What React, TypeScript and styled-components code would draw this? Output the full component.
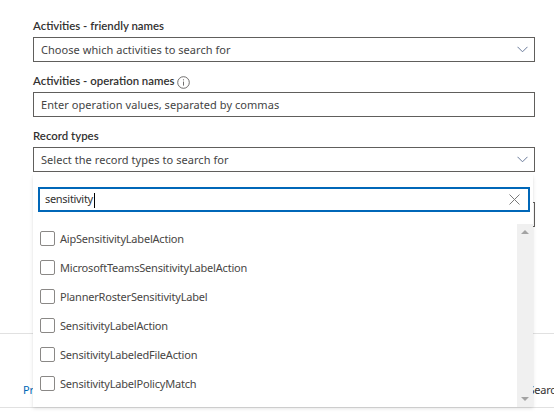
import React from 'react';
import styled, { createGlobalStyle } from 'styled-components';

const GlobalStyle = createGlobalStyle`
  html, body {
    margin: 0;
    padding: 0;
    background: #ffffff;
  }
  body {
    font-family: 'Noto Sans', 'Open Sans', sans-serif;
    color: #323130;
    overflow: hidden;
  }
`;

const Page = styled.div`
  position: relative;
  width: 554px;
  height: 416px;
  overflow: hidden;
`;

const Form = styled.div`
  display: flex;
  flex-direction: column;
  gap: 8px;
  padding: 15px 19px 0 33px;
  height: 333px;
  box-sizing: border-box;
`;

const Field = styled.div`
  display: flex;
  flex-direction: column;
  gap: 2px;
`;

const Label = styled.label`
  display: flex;
  align-items: center;
  gap: 3px;
  height: 20px;
  font-family: 'Lato', 'Noto Sans', sans-serif;
  font-size: 11.4px;
  font-weight: 600;
  color: #323130;
`;

const InfoIcon = styled.span`
  display: inline-flex;
  margin-top: 4px;
  color: #605e5c;
`;

const Box = styled.div`
  display: flex;
  align-items: center;
  justify-content: space-between;
  height: 25px;
  box-sizing: border-box;
  border: 1px solid #605e5c;
  padding: 0 6px 0 7px;
  font-size: 11px;
  letter-spacing: 0.05px;
  color: #444444;
`;

const Chevron = styled.span`
  display: inline-flex;
  color: #6a7a9a;
`;

const Footer = styled.div`
  display: flex;
  align-items: flex-end;
  justify-content: space-between;
  height: 75px;
  box-sizing: border-box;
  border-top: 1px solid #e1e1e1;
  border-bottom: 1px solid #e1e1e1;
  padding: 0 0 10px 23px;
  font-size: 11px;
  letter-spacing: -0.2px;
`;

const FooterLink = styled.span`
  color: #0067b8;
`;

const FooterAction = styled.span`
  color: #323130;
  margin-right: -8px;
`;

const Panel = styled.div`
  position: absolute;
  left: 33px;
  top: 175px;
  width: 500px;
  height: 232px;
  background: #ffffff;
  box-shadow: 0 1.6px 3.6px rgba(0, 0, 0, 0.13), 0 0.3px 0.9px rgba(0, 0, 0, 0.11);
  display: flex;
  flex-direction: column;
`;

const SearchBox = styled.div`
  margin: 12px 3px 0 5px;
  height: 25px;
  box-sizing: border-box;
  border: 2px solid #0067b8;
  display: flex;
  align-items: center;
  justify-content: space-between;
  padding: 0 8px 0 5px;
  font-size: 11px;
  letter-spacing: -0.3px;
  color: #323130;
`;

const Caret = styled.span`
  display: inline-block;
  width: 1px;
  height: 15px;
  background: #000000;
  vertical-align: middle;
  margin-left: 1px;
`;

const ListArea = styled.div`
  flex: 1;
  display: flex;
  margin-top: 12px;
`;

const List = styled.div`
  flex: 1;
  display: flex;
  flex-direction: column;
`;

const Item = styled.div`
  display: flex;
  align-items: center;
  gap: 5px;
  height: 29px;
  padding-left: 7px;
  font-size: 11px;
  letter-spacing: -0.2px;
  color: #484644;
`;

const Check = styled.span`
  width: 15px;
  height: 15px;
  box-sizing: border-box;
  border: 1px solid #8a8886;
  border-radius: 2px;
  flex: none;
`;

const Scrollbar = styled.div`
  width: 16px;
  background: #f0f0f0;
  display: flex;
  flex-direction: column;
  justify-content: space-between;
  align-items: center;
  padding: 6px 0 6px;
`;

const Arrow = styled.span<{ $down?: boolean }>`
  width: 0;
  height: 0;
  border-left: 4px solid transparent;
  border-right: 4px solid transparent;
  ${(p) =>
    p.$down
      ? 'border-top: 4px solid #a3a3a3;'
      : 'border-bottom: 4px solid #a3a3a3;'}
`;

const items = [
  'AipSensitivityLabelAction',
  'MicrosoftTeamsSensitivityLabelAction',
  'PlannerRosterSensitivityLabel',
  'SensitivityLabelAction',
  'SensitivityLabeledFileAction',
  'SensitivityLabelPolicyMatch',
];

const ChevronDown = () => (
  <svg width="11" height="7" viewBox="0 0 11 7">
    <path d="M0.5 0.8 L5.5 5.8 L10.5 0.8" fill="none" stroke="currentColor" strokeWidth="1" />
  </svg>
);

const App = () => {
  return (
    <Page>
      <GlobalStyle />
      <Form>
        <Field>
          <Label>Activities - friendly names</Label>
          <Box>
            Choose which activities to search for
            <Chevron>
              <ChevronDown />
            </Chevron>
          </Box>
        </Field>
        <Field>
          <Label>
            Activities - operation names
            <InfoIcon>
              <svg width="13" height="13" viewBox="0 0 13 13">
                <circle cx="6.5" cy="6.5" r="5.8" fill="none" stroke="currentColor" strokeWidth="0.9" />
                <line x1="6.5" y1="5.6" x2="6.5" y2="9.6" stroke="currentColor" strokeWidth="0.9" />
                <circle cx="6.5" cy="3.8" r="0.6" fill="currentColor" />
              </svg>
            </InfoIcon>
          </Label>
          <Box>Enter operation values, separated by commas</Box>
        </Field>
        <Field>
          <Label>Record types</Label>
          <Box>
            Select the record types to search for
            <Chevron>
              <ChevronDown />
            </Chevron>
          </Box>
        </Field>
        <Field>
          <Label>Search</Label>
          <Box />
        </Field>
      </Form>
      <Footer>
        <FooterLink>Preview</FooterLink>
        <FooterAction>Search</FooterAction>
      </Footer>
      <Panel>
        <SearchBox>
          <span>
            sensitivity
            <Caret />
          </span>
          <svg width="11" height="11" viewBox="0 0 11 11">
            <path d="M0.5 0.5 L10.5 10.5 M10.5 0.5 L0.5 10.5" stroke="#7a7a7a" strokeWidth="1" />
          </svg>
        </SearchBox>
        <ListArea>
          <List>
            {items.map((it) => (
              <Item key={it}>
                <Check />
                {it}
              </Item>
            ))}
          </List>
          <Scrollbar>
            <Arrow />
            <Arrow $down />
          </Scrollbar>
        </ListArea>
      </Panel>
    </Page>
  );
};

export default App;
